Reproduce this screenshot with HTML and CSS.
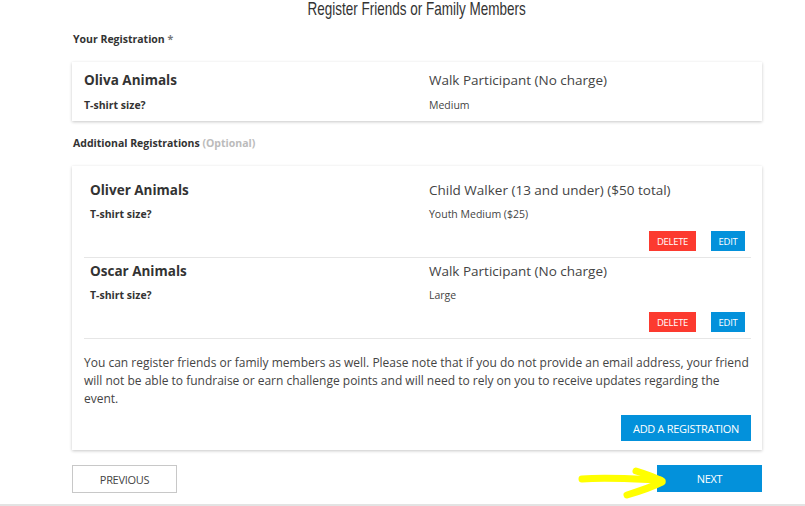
FILE: index.html
```html
<!DOCTYPE html>
<html>
<head>
<meta charset="utf-8">
<link rel="stylesheet" href="styles.css">
</head>
<body>
<div class="page">
  <h1 class="title"><span class="title-text">Register Friends or Family Members</span></h1>
  <div class="section-label">Your Registration <span class="req">*</span></div>
  <div class="card card-main">
    <div class="reg">
      <div class="name">Oliva Animals</div>
      <div class="type">Walk Participant (No charge)</div>
      <div class="label">T-shirt size?</div>
      <div class="value">Medium</div>
    </div>
  </div>
  <div class="section-label section-add">Additional Registrations <span class="opt">(Optional)</span></div>
  <div class="card card-add">
    <div class="row">
      <div class="reg">
        <div class="name">Oliver Animals</div>
        <div class="type">Child Walker (13 and under) ($50 total)</div>
        <div class="label">T-shirt size?</div>
        <div class="value">Youth Medium ($25)</div>
      </div>
      <div class="actions">
        <button class="btn btn-delete">DELETE</button>
        <button class="btn btn-edit">EDIT</button>
      </div>
    </div>
    <div class="row">
      <div class="reg">
        <div class="name">Oscar Animals</div>
        <div class="type">Walk Participant (No charge)</div>
        <div class="label">T-shirt size?</div>
        <div class="value">Large</div>
      </div>
      <div class="actions">
        <button class="btn btn-delete">DELETE</button>
        <button class="btn btn-edit">EDIT</button>
      </div>
    </div>
    <p class="note">You can register friends or family members as well. Please note that if you do not provide an email address, your friend will not be able to fundraise or earn challenge points and will need to rely on you to receive updates regarding the event.</p>
    <div class="add-wrap">
      <button class="btn btn-add">ADD A REGISTRATION</button>
    </div>
  </div>
  <div class="nav">
    <button class="btn btn-prev">PREVIOUS</button>
    <button class="btn btn-next">NEXT</button>
    <svg class="arrow" width="100" height="40" viewBox="0 0 100 40">
      <path d="M6 17 C30 15 60 17 84 18" stroke="#ffff00" stroke-width="7" fill="none" stroke-linecap="round"/>
      <path d="M60 9 C70 12 78 15 86 19" stroke="#ffff00" stroke-width="7" fill="none" stroke-linecap="round"/>
      <path d="M51 33 C64 29 76 25 86 20" stroke="#ffff00" stroke-width="7" fill="none" stroke-linecap="round"/>
    </svg>
  </div>
</div>
<div class="bottom-line"></div>
</body>
</html>
```

FILE: styles.css
```css
html, body {
  margin: 0;
  padding: 0;
  background: #fff;
}
body {
  font-family: "Open Sans", "Liberation Sans", sans-serif;
  color: #333;
  width: 805px;
  height: 506px;
  overflow: hidden;
  position: relative;
}
.page {
  width: 690px;
  margin-left: 72px;
}
.title {
  margin: -2px 0 0 0;
  font-family: "Liberation Sans", "DejaVu Sans", sans-serif;
  font-weight: normal;
  font-size: 19px;
  line-height: 22px;
  text-align: center;
  color: #333;
}
.title-text {
  display: inline-block;
  transform: scaleX(0.71);
  transform-origin: center;
}
.section-label {
  font-size: 10.5px;
  font-weight: 700;
  color: #333;
  margin: 11px 0 0 1px;
  line-height: 16px;
}
.req { color: #777; }
.opt { color: #bbb; }
.section-add { margin-top: 14px; }
.card {
  background: #fff;
  box-shadow: 0 1px 3px rgba(0,0,0,0.22);
}
.card-main {
  margin-top: 15px;
  padding: 8px 12px 8px 12px;
}
.reg {
  display: grid;
  grid-template-columns: 345px 1fr;
  align-items: center;
}
.name {
  font-size: 13.5px;
  font-weight: 700;
  color: #333;
  line-height: 20px;
}
.type {
  font-size: 13.5px;
  color: #444;
  line-height: 20px;
}
.label {
  font-size: 10.5px;
  font-weight: 700;
  color: #333;
  line-height: 16px;
  margin-top: 7px;
}
.value {
  font-size: 10.5px;
  color: #444;
  line-height: 16px;
  margin-top: 7px;
}
.card-add {
  margin-top: 15px;
  padding: 11px 11px 9px 12px;
}
.row {
  border-bottom: 1px solid #e6e6e6;
  padding-top: 3px;
  height: 77px;
}
.row .name { padding-left: 6px; }
.row .label { padding-left: 6px; margin-top: 6px; }
.row .value { margin-top: 6px; }
.actions {
  display: flex;
  justify-content: flex-end;
  gap: 15px;
  padding-right: 6px;
  margin-top: 9px;
}
.btn {
  font-family: "Open Sans", "Liberation Sans", sans-serif;
  border: none;
  color: #fff;
  cursor: pointer;
  padding: 0;
  letter-spacing: -0.3px;
}
.btn-delete {
  background: #fc3a2f;
  width: 47px;
  height: 20px;
  font-size: 9.5px;
}
.btn-edit {
  background: #0391db;
  width: 34px;
  height: 20px;
  font-size: 9.5px;
}
.note {
  margin: 15px 0 0 0;
  font-size: 12px;
  line-height: 18px;
  color: #444;
}
.add-wrap {
  display: flex;
  justify-content: flex-end;
  margin-top: 7px;
}
.btn-add {
  background: #0391db;
  width: 130px;
  height: 26px;
  font-size: 11px;
}
.nav {
  display: flex;
  justify-content: space-between;
  margin-top: 15px;
  position: relative;
}
.btn-prev {
  background: #fff;
  border: 1px solid #c8c8c8;
  color: #444;
  width: 105px;
  height: 28px;
  font-size: 11px;
}
.btn-next {
  background: #0391db;
  width: 105px;
  height: 27px;
  font-size: 11px;
}
.arrow {
  position: absolute;
  left: 504px;
  top: -3px;
}
.bottom-line {
  position: absolute;
  left: 0;
  right: 0;
  top: 504px;
  height: 2px;
  background: #e3e3e3;
}
```
